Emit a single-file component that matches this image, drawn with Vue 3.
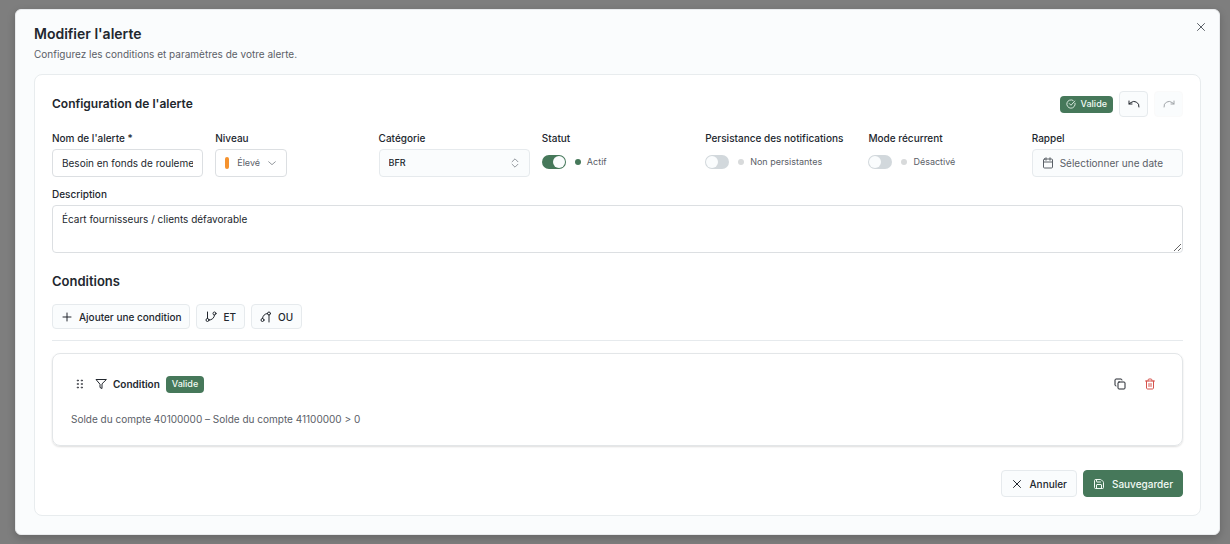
<script setup>
import { ref } from 'vue'

const name = ref('Besoin en fonds de roulement')
const level = ref('Élevé')
const category = ref('BFR')
const description = ref('Écart fournisseurs / clients défavorable')
const switches = ref([
  { id: 'status', label: 'Statut', on: true, yes: 'Actif', no: 'Inactif' },
  { id: 'persist', label: 'Persistance des notifications', on: false, yes: 'Persistantes', no: 'Non persistantes' },
  { id: 'recurring', label: 'Mode récurrent', on: false, yes: 'Activé', no: 'Désactivé' },
])
</script>

<template>
  <div class="overlay">
    <section class="dialog" role="dialog" aria-labelledby="dialog-title">
      <button class="close" aria-label="Fermer">
        <svg class="icon" viewBox="0 0 24 24"><path d="M19 5 5 19M5 5l14 14" /></svg>
      </button>
      <h1 id="dialog-title">Modifier l'alerte</h1>
      <p class="subtitle">Configurez les conditions et paramètres de votre alerte.</p>

      <form class="panel" @submit.prevent>
        <header class="panel-head">
          <h2>Configuration de l'alerte</h2>
          <span class="badge badge-icon">
            <svg class="icon small" viewBox="0 0 24 24"><path d="M21.8 10A10 10 0 1 1 17 3.34" /><path d="m8 11 4 4L21 5" /></svg>
            Valide
          </span>
          <button type="button" class="btn square" aria-label="Annuler la modification">
            <svg class="icon" viewBox="0 0 24 24"><path d="M2 6v6h6" /><path d="M22 18a10 10 0 0 0-16-9l-4 3" /></svg>
          </button>
          <button type="button" class="btn square" disabled aria-label="Rétablir la modification">
            <svg class="icon" viewBox="0 0 24 24"><path d="M22 6v6h-6" /><path d="M2 18a10 10 0 0 1 16-9l4 3" /></svg>
          </button>
        </header>

        <div class="fields">
          <div class="field">
            <label for="name">Nom de l'alerte *</label>
            <input id="name" v-model="name" class="control" type="text" />
          </div>
          <div class="field">
            <label for="level">Niveau</label>
            <div class="select level">
              <span class="level-bar"></span>
              <select id="level" v-model="level" class="control">
                <option>Élevé</option>
                <option>Moyen</option>
                <option>Bas</option>
              </select>
              <svg class="icon arrow" viewBox="0 0 24 24"><path d="m4 9 8 7 8-7" /></svg>
            </div>
          </div>
          <div class="field">
            <label for="category">Catégorie</label>
            <div class="select">
              <select id="category" v-model="category" class="control tinted category">
                <option>BFR</option>
                <option>Trésorerie</option>
              </select>
              <svg class="icon arrow" viewBox="0 0 24 24"><path d="m5 15 7 7 7-7M5 9l7-7 7 7" /></svg>
            </div>
          </div>
          <div v-for="s in switches" :key="s.id" class="field">
            <label :for="s.id">{{ s.label }}</label>
            <div class="switch-row">
              <input :id="s.id" v-model="s.on" type="checkbox" role="switch" class="switch" />
              <span class="dot" :class="{ on: s.on }"></span>
              <span>{{ s.on ? s.yes : s.no }}</span>
            </div>
          </div>
          <div class="field">
            <label for="reminder">Rappel</label>
            <button id="reminder" type="button" class="control tinted date">
              <svg class="icon" viewBox="0 0 24 24"><rect x="3" y="4" width="18" height="18" rx="2" /><path d="M8 1.5v5M16 1.5v5M3 10h18" /></svg>
              <span>Sélectionner une date</span>
            </button>
          </div>
        </div>

        <div class="field description">
          <label for="description">Description</label>
          <textarea id="description" v-model="description" class="control"></textarea>
        </div>

        <h2 class="conditions-title">Conditions</h2>
        <div class="toolbar">
          <button type="button" class="btn">
            <svg class="icon" viewBox="0 0 24 24"><path d="M4 12h16M12 4v16" /></svg>
            Ajouter une condition
          </button>
          <button type="button" class="btn">
            <svg class="icon" viewBox="0 0 24 24"><path d="M5 2v13" /><circle cx="5" cy="18" r="3" /><circle cx="19" cy="5" r="3" /><path d="M19 8A10 10 0 0 1 8 18" /></svg>
            ET
          </button>
          <button type="button" class="btn">
            <svg class="icon" viewBox="0 0 24 24"><circle cx="5" cy="18" r="3" /><circle cx="18" cy="5" r="3" /><path d="M18 8v14M5 15A10 10 0 0 1 15 5" /></svg>
            OU
          </button>
        </div>

        <article class="condition">
          <div class="condition-head">
            <svg class="icon grip" viewBox="0 0 24 24"><path d="M7 4h2v2H7zM15 4h2v2h-2zM7 11h2v2H7zM15 11h2v2h-2zM7 18h2v2H7zM15 18h2v2h-2z" /></svg>
            <svg class="icon" viewBox="0 0 24 24"><path d="M22 3H2l8 9.46V19l4 2v-8.54z" /></svg>
            <h3>Condition</h3>
            <span class="badge">Valide</span>
            <button type="button" class="ghost copy" aria-label="Dupliquer">
              <svg class="icon" viewBox="0 0 24 24"><rect x="8" y="8" width="14" height="14" rx="2" /><path d="M4 16c-1.1 0-2-.9-2-2V4c0-1.1.9-2 2-2h10c1.1 0 2 .9 2 2" /></svg>
            </button>
            <button type="button" class="ghost danger" aria-label="Supprimer">
              <svg class="icon" viewBox="0 0 24 24"><path d="M3 6h18M19 6v14c0 1-1 2-2 2H7c-1 0-2-1-2-2V6M8 6V4c0-1 1-2 2-2h4c1 0 2 1 2 2v2M10 11v6M14 11v6" /></svg>
            </button>
          </div>
          <p>Solde du compte 40100000 – Solde du compte 41100000 &gt; 0</p>
        </article>

        <footer class="actions">
          <button type="button" class="btn large">
            <svg class="icon" viewBox="0 0 24 24"><path d="M19 5 5 19M5 5l14 14" /></svg>
            Annuler
          </button>
          <button type="submit" class="btn large primary">
            <svg class="icon" viewBox="0 0 24 24"><path d="M15.2 3a2 2 0 0 1 1.4.6l3.8 3.8a2 2 0 0 1 .6 1.4V19a2 2 0 0 1-2 2H5a2 2 0 0 1-2-2V5a2 2 0 0 1 2-2z" /><path d="M17 21v-7a1 1 0 0 0-1-1H8a1 1 0 0 0-1 1v7M7 3v4a1 1 0 0 0 1 1h7" /></svg>
            Sauvegarder
          </button>
        </footer>
      </form>
    </section>
  </div>
</template>

<style>
body {
  background: #7e7e7e;
}
</style>

<style scoped>
* {
  box-sizing: border-box;
}
.overlay {
  min-height: 100vh;
  padding: 9px 10px 10px 15px;
  background: #7e7e7e;
  color: #22272e;
  font-family: Inter, "Liberation Sans", sans-serif;
  font-size: 10px;
  line-height: 14px;
}
.dialog {
  position: relative;
  padding: 15px 18px 18px;
  border: 1px solid #e9ebed;
  border-radius: 6px;
  background: #fafcfd;
  box-shadow: 0 3px 8px #0003;
}
h1, h2, h3, p {
  margin: 0;
}
h1 {
  font-size: 14px;
  line-height: 18px;
  font-weight: 600;
}
h2 {
  font-size: 12px;
  line-height: 18px;
  font-weight: 600;
}
h3 {
  font-size: 10px;
  font-weight: 600;
}
.subtitle {
  margin: 4px 0 13px;
  color: #5a6067;
}
button, input, select, textarea {
  font: inherit;
  color: inherit;
  margin: 0;
}
.icon {
  width: 12px;
  height: 12px;
  flex: none;
  fill: none;
  stroke: currentColor;
  stroke-width: 2;
  stroke-linecap: round;
  stroke-linejoin: round;
}
.icon.small {
  width: 10px;
  height: 10px;
}
.close {
  position: absolute;
  top: 9px;
  right: 10px;
  display: flex;
  padding: 2px;
  border: 0;
  background: none;
  color: #5a6067;
}
.panel {
  padding: 16px 17px 18px;
  border: 1px solid #e8ecee;
  border-radius: 8px;
  background: #fff;
}
.panel-head {
  display: flex;
  align-items: center;
  gap: 6px;
  margin-bottom: 14px;
}
.panel-head h2 {
  margin-right: auto;
}
.badge {
  display: inline-flex;
  align-items: center;
  gap: 5px;
  height: 17px;
  padding: 0 6px;
  border-radius: 4px;
  background: #46785a;
  color: #f2faf4;
  font-size: 9px;
  font-weight: 500;
}
.btn {
  display: inline-flex;
  align-items: center;
  justify-content: center;
  gap: 6px;
  height: 25px;
  padding: 0 8px;
  border: 1px solid #e6eaed;
  border-radius: 4px;
  background: #fafcfd;
  font-weight: 500;
}
.square {
  width: 29px;
  height: 26px;
  padding: 0;
}
.btn:disabled {
  border-color: #fafafa;
  color: #a0a4a8;
}
.fields {
  display: grid;
  grid-template-columns: repeat(7, minmax(0, 1fr));
  gap: 12px;
}
.field {
  display: flex;
  flex-direction: column;
  align-items: flex-start;
  gap: 4px;
  min-width: 0;
}
.field > label {
  font-weight: 500;
  white-space: nowrap;
}
.control {
  display: block;
  width: 100%;
  height: 28px;
  padding: 0 9px;
  border: 1px solid #dcdfe2;
  border-radius: 4px;
  background: #fff;
}
.control.tinted {
  border-color: #e6eaed;
  background: #fafcfd;
}
select.control {
  appearance: none;
}
.select {
  position: relative;
  width: 100%;
}
.select.level {
  width: 72px;
}
.level select {
  padding-left: 21px;
  font-size: 9px;
  color: #5a6067;
}
select.category {
  font-size: 9px;
  font-weight: 500;
}
.level-bar {
  position: absolute;
  top: 8px;
  left: 10px;
  width: 4px;
  height: 12px;
  border-radius: 2px;
  background: #f5922e;
}
.arrow {
  position: absolute;
  top: 9px;
  right: 10px;
  width: 10px;
  height: 10px;
  color: #80868c;
  pointer-events: none;
}
.switch-row {
  display: flex;
  align-items: center;
  gap: 9px;
  height: 26px;
  color: #5a6067;
  font-size: 9px;
  white-space: nowrap;
}
.switch {
  appearance: none;
  display: flex;
  width: 24px;
  height: 14px;
  padding: 1px;
  border-radius: 7px;
  background: #d2d8dc;
}
.switch::before {
  content: "";
  width: 12px;
  height: 12px;
  border-radius: 50%;
  background: #fafcfd;
}
.switch:checked {
  justify-content: flex-end;
  background: #46785a;
}
.dot {
  width: 6px;
  height: 6px;
  margin-right: -3px;
  border-radius: 50%;
  background: #d8dadb;
}
.dot.on {
  background: #46785a;
}
.date {
  display: flex;
  align-items: center;
  gap: 6px;
  color: #5a6067;
  white-space: nowrap;
}
.description {
  margin-top: 10px;
}
textarea.control {
  height: 48px;
  padding-top: 6px;
  resize: vertical;
}
.conditions-title {
  margin: 19px 0 14px;
  font-size: 13px;
}
.toolbar {
  display: flex;
  gap: 6px;
  padding-bottom: 11px;
  border-bottom: 1px solid #e6eaed;
}
.condition {
  margin-top: 12px;
  padding: 18px 18px 19px;
  border: 1px solid #e3e6e8;
  border-radius: 8px;
  box-shadow: 0 1px 2px #0002;
}
.condition-head {
  display: flex;
  align-items: center;
  gap: 6px;
  height: 24px;
  padding: 0 2px 0 3px;
}
.grip {
  margin-right: 3px;
  stroke-width: 1;
  fill: currentColor;
}
.ghost {
  display: flex;
  align-items: center;
  justify-content: center;
  width: 24px;
  height: 24px;
  padding: 0;
  border: 0;
  background: none;
}
.copy {
  margin-left: auto;
}
.danger {
  color: #d6524c;
}
.condition p {
  margin-top: 16px;
  color: #5a6067;
}
.actions {
  display: flex;
  justify-content: flex-end;
  gap: 6px;
  margin-top: 24px;
}
.large {
  gap: 7px;
  height: 27px;
  padding: 0 9px;
}
.primary {
  border-color: #46785a;
  background: #46785a;
  color: #f2faf4;
}
</style>
